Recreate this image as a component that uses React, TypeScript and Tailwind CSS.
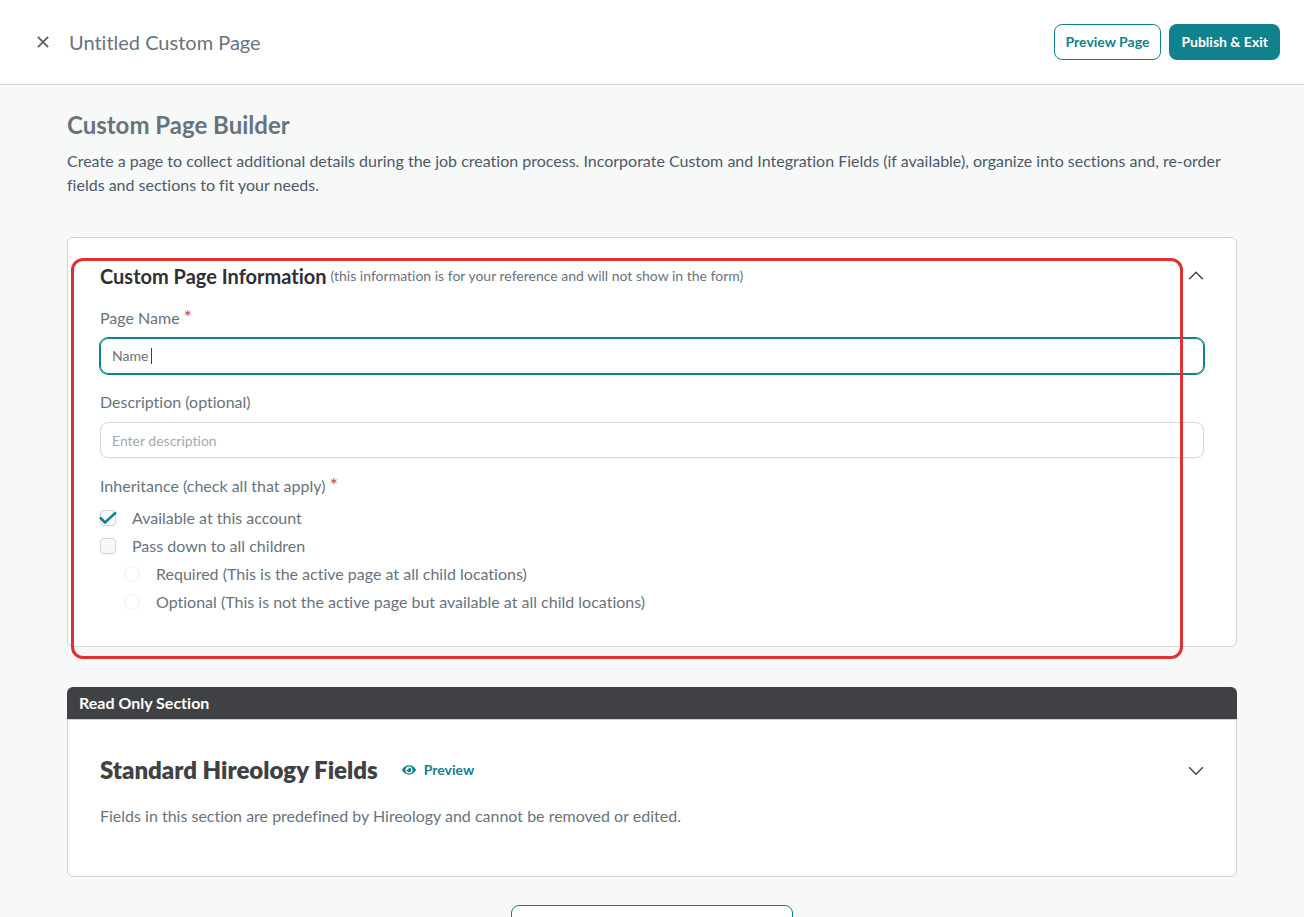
import { useState } from "react";
import type { ReactNode } from "react";
import { FaEye, FaPlus } from "react-icons/fa";

type LabelProps = {
  children: ReactNode
  required?: boolean
}

type OptionProps = {
  id: string
  label: string
  checked: boolean
  onChange: () => void
}

function LabelText({ children, required }: LabelProps) {
  return (
    <>
      {children}
      {required && <span className="ml-1 text-xl/4 text-[#e0403c]">*</span>}
    </>
  )
}

function Chevron({ up }: { up?: boolean }) {
  return (
    <svg
      viewBox="0 0 16 16"
      className="size-4"
      fill="none"
      stroke="currentColor"
      strokeWidth="1.4"
      aria-hidden="true"
    >
      {up ? <path d="M1.2 11.2L8 4.2L14.8 11.2" /> : <path d="M1.2 5.2L8 12.2L14.8 5.2" />}
    </svg>
  )
}

function Checkbox({ id, label, checked, onChange }: OptionProps) {
  return (
    <div className="flex items-center gap-4">
      <span className="relative flex">
        <input
          id={id}
          type="checkbox"
          checked={checked}
          onChange={onChange}
          className="appearance-none size-4 rounded border border-[#d3d6d8] bg-[#f7f9f8] shadow-xs"
        />
        {checked && (
          <svg
            viewBox="0 0 18 16"
            className="absolute -left-px top-0 w-[18px] h-4 pointer-events-none"
            fill="none"
            stroke="#10828e"
            strokeWidth="2.6"
            aria-hidden="true"
          >
            <path d="M0.9 7.4L6 12.4L17 2.4" />
          </svg>
        )}
      </span>
      <label htmlFor={id}>{label}</label>
    </div>
  )
}

function Radio({ id, label, checked, onChange }: OptionProps) {
  return (
    <div className="flex items-center gap-4 ml-6">
      <input
        id={id}
        type="radio"
        name="inheritance"
        checked={checked}
        onChange={onChange}
        disabled
        className="appearance-none size-4 rounded-full border border-[#eeeff0] bg-white"
      />
      <label htmlFor={id}>{label}</label>
    </div>
  )
}

export default function App() {
  const [name, setName] = useState('Name')
  const [description, setDescription] = useState('')
  const [available, setAvailable] = useState(true)
  const [passDown, setPassDown] = useState(false)
  const [mode, setMode] = useState('')

  return (
    <div className="h-screen overflow-hidden bg-[#f7f9f8] font-['Lato',sans-serif] text-base text-[#68737d] antialiased [font-variant-ligatures:none]">
      <header className="flex items-center justify-between border-b border-[#d3d7de] bg-white px-6 py-6">
        <div className="flex items-center gap-2">
          <button type="button" aria-label="Close" className="flex h-9 w-[37px] items-center justify-center">
            <svg viewBox="0 0 12 12" className="size-3" stroke="#5b6670" strokeWidth="2" aria-hidden="true">
              <path d="M0.9 0.9L11.1 11.1M11.1 0.9L0.9 11.1" />
            </svg>
          </button>
          <h1 className="text-xl">Untitled Custom Page</h1>
        </div>
        <div className="flex gap-2 text-sm font-bold">
          <button type="button" className="h-9 rounded-lg border border-[#10828e] bg-white px-[11px] text-[#10828e]">
            Preview Page
          </button>
          <button type="button" className="h-9 rounded-lg bg-[#10828e] px-3 text-white">
            Publish &amp; Exit
          </button>
        </div>
      </header>

      <main className="mx-auto max-w-[1170px] pt-6">
        <h2 className="mb-2 text-2xl font-bold">Custom Page Builder</h2>
        <p className="mb-10 text-[#4d5868]">
          Create a page to collect additional details during the job creation process. Incorporate Custom and
          Integration Fields (if available), organize into sections and, re-order fields and sections to fit your needs.
        </p>

        <section className="relative rounded-md border border-[#d0d5dd] bg-white px-8 pt-6 pb-8">
          <div className="flex items-center gap-1">
            <h3 className="text-xl font-bold text-[#2f3033]">Custom Page Information</h3>
            <small className="text-sm">(this information is for your reference and will not show in the form)</small>
            <button type="button" aria-label="Collapse" className="ml-auto text-[#404145]">
              <Chevron up />
            </button>
          </div>

          <label htmlFor="name" className="mt-4 mb-2 block">
            <LabelText required>Page Name</LabelText>
          </label>
          <div className="flex h-9 items-center rounded-lg border border-[#10828e] px-[11px] text-sm ring-1 ring-[#10828e]">
            <input
              id="name"
              value={name}
              onChange={(e) => setName(e.target.value)}
              className="w-[39px] bg-transparent outline-none"
            />
            <span className="h-4 w-px bg-[#404145]" />
          </div>

          <label htmlFor="description" className="mt-4 mb-2 block">
            <LabelText>Description (optional)</LabelText>
          </label>
          <input
            id="description"
            value={description}
            onChange={(e) => setDescription(e.target.value)}
            placeholder="Enter description"
            className="block h-9 w-full rounded-lg border border-[#d6d8da] px-[11px] text-sm shadow-xs outline-none placeholder:text-[#a3a9af]"
          />

          <fieldset className="mt-4">
            <legend className="mb-2">
              <LabelText required>Inheritance (check all that apply)</LabelText>
            </legend>
            <div className="flex flex-col gap-1">
              <Checkbox
                id="available"
                label="Available at this account"
                checked={available}
                onChange={() => setAvailable(p => !p)}
              />
              <Checkbox
                id="pass-down"
                label="Pass down to all children"
                checked={passDown}
                onChange={() => setPassDown(p => !p)}
              />
              <Radio
                id="required"
                label="Required (This is the active page at all child locations)"
                checked={mode === 'required'}
                onChange={() => setMode('required')}
              />
              <Radio
                id="optional"
                label="Optional (This is not the active page but available at all child locations)"
                checked={mode === 'optional'}
                onChange={() => setMode('optional')}
              />
            </div>
          </fieldset>

          <div className="pointer-events-none absolute top-5 -bottom-[13px] left-[3px] right-[53px] rounded-xl border-3 border-[#e03131]" />
        </section>

        <section className="mt-10">
          <p className="rounded-t-md bg-[#404145] px-3 py-1 font-bold text-white">Read Only Section</p>
          <div className="rounded-b-md border border-[#d0d3de] bg-white px-8 pt-[34px] pb-12">
            <div className="flex items-center">
              <h3 className="text-2xl font-extrabold text-[#404145]">Standard Hireology Fields</h3>
              <button type="button" className="ml-6 flex items-center gap-2 text-sm font-bold text-[#10828e]">
                <FaEye size={14} />
                Preview
              </button>
              <button type="button" aria-label="Expand" className="ml-auto text-[#404145]">
                <Chevron />
              </button>
            </div>
            <p className="mt-[18px]">Fields in this section are predefined by Hireology and cannot be removed or edited.</p>
          </div>
        </section>

        <button
          type="button"
          className="mx-auto mt-7 flex h-9 items-center gap-3 rounded-lg border border-[#10828e] bg-white px-3 text-sm font-bold text-[#10828e]"
        >
          <FaPlus size={14} />
          Add New Section with Custom Fields
        </button>
      </main>
    </div>
  )
}
